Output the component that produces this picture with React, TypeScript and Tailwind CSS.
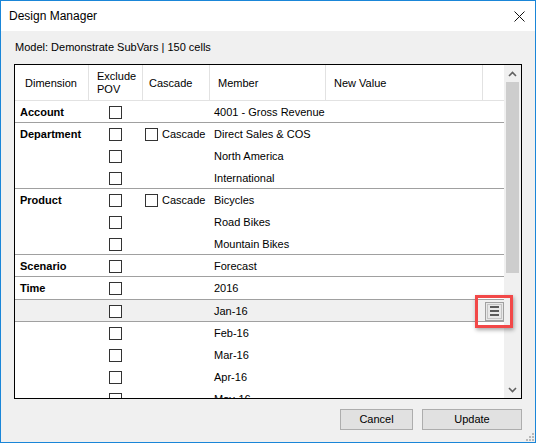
import React from 'react';

type Row = {
  dim?: string;
  cascade?: boolean;
  member: string;
  last?: boolean;
  selected?: boolean;
  tall?: boolean;
};

const rows: Row[] = [
  { dim: 'Account', member: '4001 - Gross Revenue', last: true },
  { dim: 'Department', cascade: true, member: 'Direct Sales & COS' },
  { member: 'North America' },
  { member: 'International', last: true },
  { dim: 'Product', cascade: true, member: 'Bicycles' },
  { member: 'Road Bikes' },
  { member: 'Mountain Bikes', last: true },
  { dim: 'Scenario', member: 'Forecast', last: true },
  { dim: 'Time', member: '2016', last: true, tall: true },
  { member: 'Jan-16', selected: true },
  { member: 'Feb-16' },
  { member: 'Mar-16' },
  { member: 'Apr-16' },
  { member: 'May-16' },
];

function CheckBox() {
  return <span className="block w-[13px] h-[13px] border border-[#333333] bg-white" />;
}

function MenuButton() {
  return (
    <div className="relative w-[19px] h-[19px] border border-[#a0a0a0] bg-[#e8e8e8] p-[1px]">
      <div className="w-full h-full border border-[#c4c4c4] flex flex-col items-center justify-center gap-[2px]">
        <span className="block w-[9px] h-[2px] bg-[#5a5a5a]" />
        <span className="block w-[9px] h-[2px] bg-[#5a5a5a]" />
        <span className="block w-[9px] h-[2px] bg-[#5a5a5a]" />
      </div>
      {/* red callout around the button */}
      <div className="absolute left-[-11px] top-[-8px] w-[38px] h-[33px] border-[3px] border-[#f24848] shadow-[1px_2px_4px_rgba(0,0,0,0.35)]" />
    </div>
  );
}

export default function App() {
  return (
    <div className="w-[536px] h-[443px] border border-[#1a86d8] bg-[#f0f0f0] flex flex-col text-black font-['Liberation_Sans',Arial,sans-serif]">
      {/* Title bar */}
      <div className="h-[30px] bg-white flex items-center justify-between pl-[8px] pr-[10px] shrink-0">
        <span className="text-[12px]">Design Manager</span>
        <svg width="11" height="11" viewBox="0 0 11 11" className="mt-[1px]">
          <path d="M0.5 0.5 L10.5 10.5 M10.5 0.5 L0.5 10.5" stroke="#111" strokeWidth="1" fill="none" />
        </svg>
      </div>

      <div className="flex-1 flex flex-col pl-[13px] pr-[12px]">
        <div className="text-[11px] leading-[13px] mt-[10px] ml-[1px]">Model: Demonstrate SubVars | 150 cells</div>

        {/* Grid */}
        <div className="mt-[10px] w-[508px] h-[335px] border border-black bg-white flex overflow-hidden">
          <div className="w-[489px] flex flex-col text-[11px]">
            {/* Header */}
            <div className="h-[36px] shrink-0 flex border-b border-[#e2e2e2]">
              <div className="w-[74px] border-r border-[#e2e2e2] flex items-center pl-[10px] pt-[2px]">Dimension</div>
              <div className="w-[54px] border-r border-[#e2e2e2] flex flex-col justify-center pl-[8px] leading-[13px] pt-[1px]">
                <span>Exclude</span>
                <span>POV</span>
              </div>
              <div className="w-[67px] border-r border-[#e2e2e2] flex items-center pl-[6px] pt-[2px]">Cascade</div>
              <div className="w-[116px] border-r border-[#e2e2e2] flex items-center pl-[8px] pt-[2px]">Member</div>
              <div className="w-[157px] border-r border-[#e2e2e2] flex items-center pl-[8px] pt-[2px]">New Value</div>
              <div className="w-[21px]" />
            </div>

            {/* Rows */}
            {rows.map((r, i) => (
              <div
                key={i}
                className={`${r.tall ? 'h-[23px]' : 'h-[22px]'} shrink-0 flex items-center pt-[1px] ${
                  r.last ? 'border-b border-[#a0a0a0]' : ''
                } ${r.selected ? 'bg-[#f0f0f0] border-b border-[#a0a0a0]' : ''}`}
              >
                <div className="w-[74px] pl-[5px] font-bold">{r.dim}</div>
                <div className="w-[54px] flex pl-[20px]">
                  <CheckBox />
                </div>
                <div className="w-[67px] flex items-center pl-[2px] gap-[4px]">
                  {r.cascade && (
                    <>
                      <CheckBox />
                      <span>Cascade</span>
                    </>
                  )}
                </div>
                <div className="w-[116px] pl-[4px]">{r.member}</div>
                <div className="w-[157px]" />
                <div className="w-[21px] flex justify-end">{r.selected && <MenuButton />}</div>
              </div>
            ))}
          </div>

          {/* Scrollbar */}
          <div className="w-[17px] bg-[#f0f0f0] flex flex-col">
            <div className="h-[17px] flex items-center justify-center">
              <svg width="9" height="6" viewBox="0 0 9 6">
                <path d="M1 5 L4.5 1.5 L8 5" stroke="#606060" strokeWidth="1.6" fill="none" />
              </svg>
            </div>
            <div className="h-[191px] mx-[2px] bg-[#cdcdcd]" />
            <div className="flex-1" />
            <div className="h-[17px] flex items-center justify-center">
              <svg width="9" height="6" viewBox="0 0 9 6">
                <path d="M1 1 L4.5 4.5 L8 1" stroke="#606060" strokeWidth="1.6" fill="none" />
              </svg>
            </div>
          </div>
        </div>

        {/* Buttons */}
        <div className="mt-[10px] flex justify-end gap-[9px] pr-[1px]">
          <button className="w-[73px] h-[21px] bg-[#e1e1e1] border border-[#adadad] text-[11px]">Cancel</button>
          <button className="w-[100px] h-[21px] bg-[#e1e1e1] border border-[#adadad] text-[11px]">Update</button>
        </div>

        <div className="flex-1 flex justify-end items-end pb-[1px] mr-[-11px]">
          <svg width="8" height="8" viewBox="0 0 8 8">
            <rect x="6" y="0" width="2" height="2" fill="#b8b8b8" />
            <rect x="3" y="3" width="2" height="2" fill="#b8b8b8" />
            <rect x="6" y="3" width="2" height="2" fill="#b8b8b8" />
            <rect x="0" y="6" width="2" height="2" fill="#b8b8b8" />
            <rect x="3" y="6" width="2" height="2" fill="#b8b8b8" />
            <rect x="6" y="6" width="2" height="2" fill="#b8b8b8" />
          </svg>
        </div>
      </div>
    </div>
  );
}
